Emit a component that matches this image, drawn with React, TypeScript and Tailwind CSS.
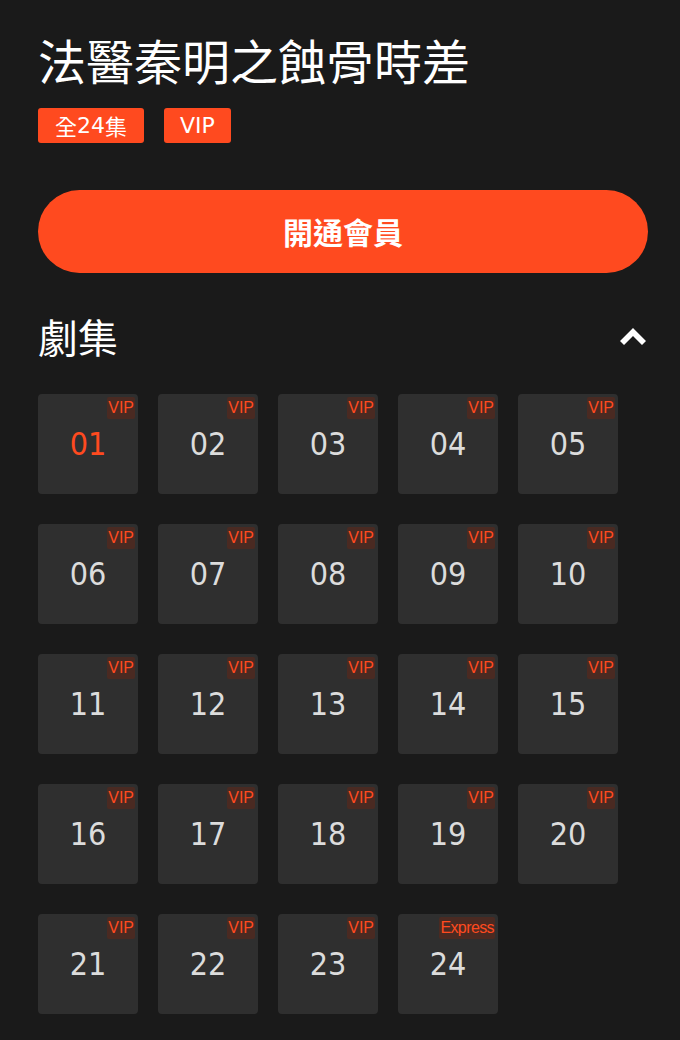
const episodes = Array.from({ length: 24 }, (_, i) => i + 1);

const cjk = "font-['Noto_Sans_CJK_TC',sans-serif]";

const EpisodeTile = ({ num, active }: { num: number; active: boolean }) => {
  const label = num < 10 ? `0${num}` : `${num}`;
  const isExpress = num === 24;
  return (
    <div className="relative w-[100px] h-[100px] rounded-[4px] bg-[#2f2f2f] flex items-center justify-center">
      <span
        className={`absolute top-[3px] right-[3px] h-[22px] leading-[22px] px-[1px] rounded-[2px] bg-[#4a2a22] text-[#ff4a1f] text-[16px] font-['Liberation_Sans',Arial,sans-serif] ${isExpress ? 'tracking-[-0.6px]' : ''}`}
      >
        {isExpress ? 'Express' : 'VIP'}
      </span>
      <span
        className={`text-[32px] leading-none font-['DejaVu_Sans_Condensed','DejaVu_Sans',sans-serif] ${active ? 'text-[#ff4a1f]' : 'text-[#dcdcdc]'}`}
      >
        {label}
      </span>
    </div>
  );
};

export default function App() {
  return (
    <div className="w-[680px] h-[1040px] bg-[#1a1a1a] pl-[38px] pr-[32px] pt-[31px] overflow-hidden font-['DejaVu_Sans','Noto_Sans_CJK_TC',sans-serif]">
      {/* TITLE */}
      <h1 className={`text-white text-[48px] leading-[56px] font-normal ${cjk}`}>
        法醫秦明之蝕骨時差
      </h1>

      {/* TAGS */}
      <div className="flex gap-[20px] mt-[21px]">
        <span className="h-[35px] px-[17px] rounded-[3px] bg-[#ff4a1f] text-white text-[22px] leading-[35px] flex items-center">
          <span className={cjk}>全</span>
          <span>24</span>
          <span className={cjk}>集</span>
        </span>
        <span className="h-[35px] px-[16px] rounded-[3px] bg-[#ff4a1f] text-white text-[22px] leading-[35px]">
          VIP
        </span>
      </div>

      {/* MEMBER BUTTON */}
      <button
        className={`mt-[47px] w-full h-[83px] rounded-full bg-[#ff4a1f] text-white text-[30px] font-bold flex items-center justify-center ${cjk}`}
      >
        開通會員
      </button>

      {/* EPISODES HEADER */}
      <div className="mt-[39px] flex items-center justify-between">
        <h2 className={`text-white text-[40px] leading-[48px] font-normal ${cjk}`}>劇集</h2>
        <svg width="26" height="17" viewBox="0 0 26 17" className="mr-[2px]">
          <polygon points="13,0 26,13 22,17 13,8 4,17 0,13" fill="#ffffff" />
        </svg>
      </div>

      {/* EPISODE GRID */}
      <div className="mt-[34px] grid grid-cols-[repeat(5,100px)] gap-x-[20px] gap-y-[30px]">
        {episodes.map((n) => (
          <EpisodeTile key={n} num={n} active={n === 1} />
        ))}
      </div>
    </div>
  );
}
